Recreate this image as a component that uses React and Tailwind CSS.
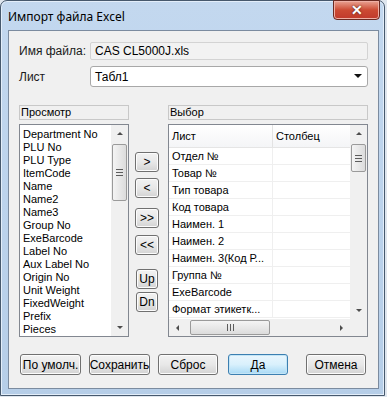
const ui = { fontFamily: '"Liberation Sans", Arial, sans-serif' };

function Btn({ children, className = "", primary = false }) {
    return (
        <div
            className={`flex items-center justify-center rounded-[3px] border text-black ${
                primary
                    ? "border-[#3c7fb1] bg-gradient-to-b from-[#eaf6fd] via-[#d9f0fc] to-[#a7d9f5] shadow-[inset_0_0_0_1px_#c4e5f6]"
                    : "border-[#707070] bg-gradient-to-b from-[#f2f2f2] via-[#e8e8e8] to-[#d3d3d3] shadow-[inset_0_0_0_1px_#fcfcfc]"
            } ${className}`}
        >
            {children}
        </div>
    );
}

function Arrow({ dir }) {
    const pts = {
        up: "1,5 4,2 7,5",
        down: "1,2 4,5 7,2",
        left: "5,1 2,4 5,7",
        right: "2,1 5,4 2,7"
    }[dir];
    return (
        <svg width="8" height="8" viewBox="0 0 8 8">
            <polygon points={pts} fill="#4d4d4d" />
        </svg>
    );
}

function VScroll({ thumbTop, thumbHeight, className = "" }) {
    return (
        <div className={`flex w-[17px] flex-col bg-[#f0f0f0] ${className}`}>
            <div className="flex h-[17px] items-center justify-center"><Arrow dir="up" /></div>
            <div className="relative flex-1">
                <div
                    className="absolute left-[1px] right-[1px] flex flex-col items-center justify-center gap-[2px] rounded-[2px] border border-[#9a9a9a] bg-gradient-to-r from-[#f4f4f4] to-[#dcdcdc]"
                    style={{ top: thumbTop, height: thumbHeight }}
                >
                    <div className="h-px w-[7px] bg-[#5c5c5c]" />
                    <div className="h-px w-[7px] bg-[#5c5c5c]" />
                    <div className="h-px w-[7px] bg-[#5c5c5c]" />
                </div>
            </div>
            <div className="flex h-[17px] items-center justify-center"><Arrow dir="down" /></div>
        </div>
    );
}

const leftItems = [
    "Department No", "PLU No", "PLU Type", "ItemCode", "Name", "Name2", "Name3", "Group No",
    "ExeBarcode", "Label No", "Aux Label No", "Origin No", "Unit Weight", "FixedWeight", "Prefix", "Pieces"
];

const rightItems = [
    "Отдел №", "Товар №", "Тип товара", "Код товара", "Наимен. 1", "Наимен. 2",
    "Наимен. 3(Код Р...", "Группа №", "ExeBarcode", "Формат этикетк..."
];

export default function App() {
    return (
        <div className="h-[397px] w-[387px] overflow-hidden bg-[#dfe6ee]" style={ui}>
            <div className="flex h-[396px] w-[385px] flex-col rounded-t-[7px] border border-[#47596d] bg-gradient-to-b from-[#c3d8ef] via-[#bcd3ec] to-[#b6cee8] shadow-[inset_0_0_0_1px_#e3eefa]">
                {/* title bar */}
                <div className="relative flex h-[29px] items-center pl-[7px] pt-[2px]">
                    <span className="text-[12px] text-black" style={{ fontFamily: '"Noto Sans", "Open Sans", sans-serif' }}>
                        Импорт файла Excel
                    </span>
                    <div className="absolute right-[4px] top-[-1px] flex h-[20px] w-[47px] items-center justify-center rounded-b-[4px] border border-[#6b2a22] bg-gradient-to-b from-[#e8a293] via-[#cc4a33] to-[#c0392b] shadow-[inset_0_0_0_1px_#efb0a5]">
                        <span className="text-[14px] font-bold leading-none text-white [text-shadow:0_0_2px_#3a1a14]">✕</span>
                    </div>
                </div>

                {/* client area */}
                <div className="mx-[7px] flex h-[359px] w-[371px] flex-col border border-[#7b8b9f] bg-[#f0f0f0] px-[10px] pt-[11px] text-[12px] text-black">
                    <div className="flex h-[18px] items-center">
                        <div className="w-[71px] text-[#1a1a1a]">Имя файла:</div>
                        <div className="flex h-[18px] w-[278px] items-center rounded-[2px] border border-[#d3d3d3] bg-[#f2f2f2] pl-[4px]">
                            CAS CL5000J.xls
                        </div>
                    </div>
                    <div className="mt-[6px] flex h-[21px] items-center">
                        <div className="w-[71px] text-[#1a1a1a]">Лист</div>
                        <div className="flex h-[21px] w-[278px] items-center justify-between rounded-[3px] border border-[#a8a8a8] bg-white pl-[4px] pr-[5px]">
                            <span>Табл1</span>
                            <svg width="8" height="5" viewBox="0 0 8 5"><polygon points="0,0 8,0 4,4" fill="#111" /></svg>
                        </div>
                    </div>

                    <div className="mt-[18px] flex h-[232px]">
                        {/* left */}
                        <div className="flex w-[110px] flex-col">
                            <div className="flex h-[15px] items-center border border-[#c8c8c8] pl-[1px] text-[11px]">Просмотр</div>
                            <div className="mt-[4px] flex h-[213px] border border-[#828790] bg-white">
                                <div className="flex-1 overflow-hidden pl-[3px] pt-[3px] text-[11px] leading-[13px]">
                                    {leftItems.map((t) => (
                                        <div key={t} className="whitespace-nowrap">{t}</div>
                                    ))}
                                </div>
                                <VScroll thumbTop={2} thumbHeight={57} />
                            </div>
                        </div>

                        {/* middle buttons */}
                        <div className="flex w-[39px] flex-col pl-[6px] pt-[47px] text-[12px]">
                            <Btn className="h-[20px] w-[24px]">&gt;</Btn>
                            <Btn className="mt-[6px] h-[20px] w-[24px]">&lt;</Btn>
                            <Btn className="mt-[10px] h-[20px] w-[24px]">&gt;&gt;</Btn>
                            <Btn className="mt-[7px] h-[20px] w-[24px]">&lt;&lt;</Btn>
                            <Btn className="ml-[1px] mt-[14px] h-[20px] w-[22px]">Up</Btn>
                            <Btn className="ml-[1px] mt-[3px] h-[20px] w-[22px]">Dn</Btn>
                        </div>

                        {/* right */}
                        <div className="flex w-[200px] flex-col">
                            <div className="flex h-[15px] items-center border border-[#c8c8c8] pl-[1px] text-[11px]">Выбор</div>
                            <div className="mt-[4px] flex h-[213px] flex-col border border-[#828790] bg-white text-[11px]">
                                <div className="flex h-[194px]">
                                    <div className="flex w-[181px] flex-col overflow-hidden">
                                        <div className="flex h-[23px] border-b border-[#e5e5e5] bg-gradient-to-b from-white to-[#f4f5f7]">
                                            <div className="flex w-[104px] items-center border-r border-[#e3e3e3] pl-[3px]">Лист</div>
                                            <div className="flex flex-1 items-center pl-[3px]">Столбец</div>
                                        </div>
                                        {rightItems.map((t) => (
                                            <div key={t} className="flex h-[17px] shrink-0 border-b border-[#efefef]">
                                                <div className="flex w-[104px] items-center whitespace-nowrap border-r border-[#efefef] pl-[3px]">{t}</div>
                                                <div className="flex-1" />
                                            </div>
                                        ))}
                                    </div>
                                    <VScroll thumbTop={2} thumbHeight={28} />
                                </div>
                                <div className="flex h-[17px]">
                                    <div className="flex w-[181px] items-center bg-[#f0f0f0]">
                                        <div className="flex w-[17px] items-center justify-center"><Arrow dir="left" /></div>
                                        <div className="relative h-full flex-1">
                                            <div className="absolute bottom-[1px] left-[4px] top-[1px] flex w-[80px] items-center justify-center gap-[2px] rounded-[2px] border border-[#9a9a9a] bg-gradient-to-b from-[#f4f4f4] to-[#dcdcdc]">
                                                <div className="h-[7px] w-px bg-[#5c5c5c]" />
                                                <div className="h-[7px] w-px bg-[#5c5c5c]" />
                                                <div className="h-[7px] w-px bg-[#5c5c5c]" />
                                            </div>
                                        </div>
                                        <div className="flex w-[17px] items-center justify-center"><Arrow dir="right" /></div>
                                    </div>
                                    <div className="w-[17px] bg-[#f0f0f0]" />
                                </div>
                            </div>
                        </div>
                    </div>

                    {/* bottom buttons */}
                    <div className="mt-[17px] flex h-[21px]">
                        <Btn className="ml-[1px] h-[21px] w-[61px]">По умолч.</Btn>
                        <Btn className="ml-[8px] h-[21px] w-[61px]">Сохранить</Btn>
                        <Btn className="ml-[8px] h-[21px] w-[60px]">Сброс</Btn>
                        <Btn primary className="ml-[10px] h-[21px] w-[60px]">Да</Btn>
                        <Btn className="ml-[18px] h-[21px] w-[60px]">Отмена</Btn>
                    </div>
                </div>
            </div>
        </div>
    );
}
